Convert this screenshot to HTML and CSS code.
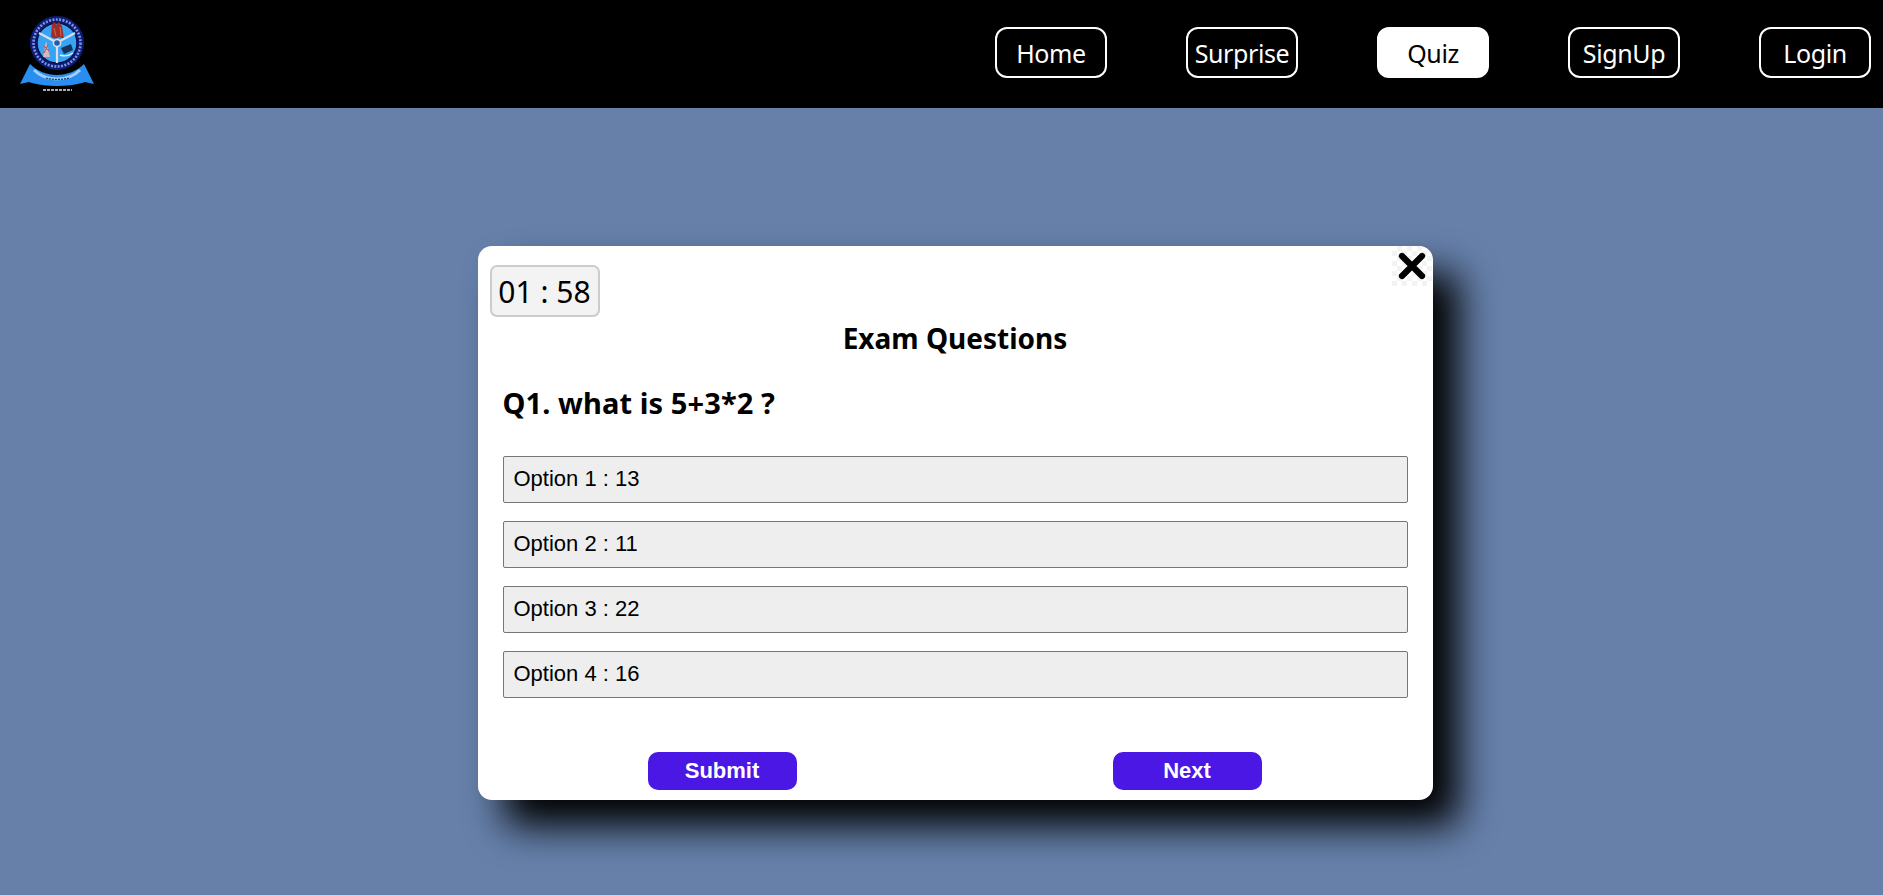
FILE: index.html
```html
<!DOCTYPE html>
<html lang="en">
<head>
    <meta charset="UTF-8">
    <meta name="viewport" content="width=device-width, initial-scale=1.0">
    <title>Quiz</title>
    <link rel="stylesheet" href="styles.css">
</head>
<body>

<nav class="navbar">
    <svg class="logo" viewBox="15 10 85 85" aria-hidden="true">
        <defs>
            <filter id="soft"><feGaussianBlur stdDeviation="0.55"/></filter>
        </defs>
        <g filter="url(#soft)">
            <!-- outer ring with the lettering -->
            <circle cx="57" cy="43" r="27" fill="#0c1c78"/>
            <circle cx="57" cy="43" r="23.5" fill="none" stroke="#7f96dc" stroke-width="2.6" stroke-dasharray="2 1.4"/>
            <circle cx="57" cy="43" r="20" fill="#39a3f2" stroke="#06114a" stroke-width="1.4"/>
            <!-- tower, pylon and machine between the spokes -->
            <path d="M52 24l3-2 1 3 3-3 3 4 2 13-5-2-3 2-5-2z" fill="#9c2f28"/>
            <path d="M54 28l2 8M60 27l1 9" stroke="#d9645a" stroke-width="1"/>
            <path d="M46 41l-3 16h7z" fill="#d8b7bd"/>
            <path d="M44 46l5 5M48 45l-4 8" stroke="#a84d4d" stroke-width="1"/>
            <path d="M61 48l10-4 2 6-9 4z" fill="#13325e"/>
            <path d="M60 55c5 2 10 0 13-2" fill="none" stroke="#e8f2ff" stroke-width="1.4"/>
            <!-- spokes -->
            <path d="M39 33l15 8M75 33l-15 8M57 47v16" stroke="#d7e0ea" stroke-width="2.2"/>
            <circle cx="57" cy="43" r="3.6" fill="#1e5fae" stroke="#d7e0ea" stroke-width="1.6"/>
            <!-- ribbon -->
            <path d="M30 64c7 7 17 11 27 11s20-4 27-11l10 20-9-2-3 1c-7 2-16 3-25 3s-18-1-25-3l-3-1-9 2z" fill="#2b8df0"/>
            <path d="M34 70c6 6 14 9 23 9s17-3 23-9" fill="none" stroke="#9fd0ff" stroke-width="3"/>
            <path d="M46 78c7 2 16 2 23 0" fill="none" stroke="#13346b" stroke-width="1.3" stroke-dasharray="2 1"/>
            <!-- year line under the ribbon -->
            <path d="M43 90h29" stroke="#a9aeb6" stroke-width="2.2" stroke-dasharray="3 1"/>
        </g>
    </svg>
    <div class="nav-links">
        <a class="nav-btn" href="#">Home</a>
        <a class="nav-btn" href="#">Surprise</a>
        <a class="nav-btn active" href="#">Quiz</a>
        <a class="nav-btn" href="#">SignUp</a>
        <a class="nav-btn" href="#">Login</a>
    </div>
</nav>

<main class="page">
    <div class="modal">
        <button class="close-btn" aria-label="Close">
            <svg viewBox="0 0 24 24"><path d="M4 4l16 16M20 4L4 20" stroke="#000" stroke-width="5" stroke-linecap="round"/></svg>
        </button>
        <div class="timer">01 : 58</div>
        <h2 class="modal-title">Exam Questions</h2>
        <h3 class="question">Q1. what is 5+3*2 ?</h3>
        <div class="options">
            <input class="option" type="text" readonly value="Option 1 : 13">
            <input class="option" type="text" readonly value="Option 2 : 11">
            <input class="option" type="text" readonly value="Option 3 : 22">
            <input class="option" type="text" readonly value="Option 4 : 16">
        </div>
        <div class="actions">
            <button class="action-btn">Submit</button>
            <button class="action-btn">Next</button>
        </div>
    </div>
</main>

</body>
</html>
```

FILE: styles.css
```css
* {
    box-sizing: border-box;
}
body {
    margin: 0;
    height: 895px;
    overflow: hidden;
    background-color: #6680aa;
    font-family: "Noto Sans", sans-serif;
}
.navbar {
    height: 108px;
    background-color: #000;
    display: flex;
    align-items: center;
    justify-content: space-between;
    padding: 0 12px 0 15px;
}
.logo {
    width: 85px;
    height: 85px;
    margin-top: -3px;
}
.nav-links {
    display: flex;
    gap: 79px;
    margin-top: -3px;
}
.nav-btn {
    width: 112px;
    height: 51px;
    display: flex;
    align-items: center;
    justify-content: center;
    border: 2px solid #fff;
    border-radius: 12px;
    color: #fff;
    font-size: 25px;
    text-decoration: none;
    letter-spacing: -0.4px;
}
.nav-btn.active {
    background-color: #fff;
    color: #000;
}
.page {
    display: flex;
    justify-content: center;
    padding: 138px 0 0 27px;
}
.modal {
    position: relative;
    width: 955px;
    height: 554px;
    background-color: #fff;
    border-radius: 14px;
    box-shadow: 26px 26px 38px #000;
    padding: 19px 25px 0;
}
.close-btn {
    position: absolute;
    top: 0;
    right: 1px;
    width: 40px;
    height: 40px;
    padding: 5px;
    border: none;
    border-top-right-radius: 14px;
    cursor: pointer;
    background-color: #fff;
    background-image: conic-gradient(#f3f3f3 25%, #fff 0 50%, #f3f3f3 0 75%, #fff 0);
    background-size: 10px 10px;
}
.timer {
    position: absolute;
    top: 19px;
    left: 12px;
    width: 110px;
    height: 52px;
    display: flex;
    align-items: center;
    justify-content: center;
    background-color: #f3f3f3;
    border: 2px solid #ccc;
    border-radius: 7px;
    font-size: 30px;
}
.modal-title {
    margin: 53px 0 0;
    height: 40px;
    line-height: 40px;
    text-align: center;
    font-size: 28px;
    font-weight: 700;
}
.question {
    margin: 25px 0 0;
    height: 40px;
    line-height: 40px;
    font-size: 29px;
    font-weight: 700;
    letter-spacing: 0.1px;
}
.options {
    display: flex;
    flex-direction: column;
    gap: 18px;
    margin-top: 33px;
}
.option {
    width: 100%;
    height: 47px;
    padding: 0 10px 2px;
    background-color: #eee;
    border: 1px solid #767676;
    border-radius: 2px;
    font-family: "Liberation Sans", Arial, sans-serif;
    font-size: 22px;
    color: #000;
    outline: none;
}
.actions {
    display: grid;
    grid-template-columns: 149px 149px;
    justify-content: space-between;
    padding: 0 146px 0 145px;
    margin-top: 54px;
}
.action-btn {
    height: 38px;
    background-color: #4a17e5;
    color: #fff;
    border: none;
    border-radius: 10px;
    font-family: "Liberation Sans", Arial, sans-serif;
    font-size: 22px;
    font-weight: 700;
    cursor: pointer;
}
```
